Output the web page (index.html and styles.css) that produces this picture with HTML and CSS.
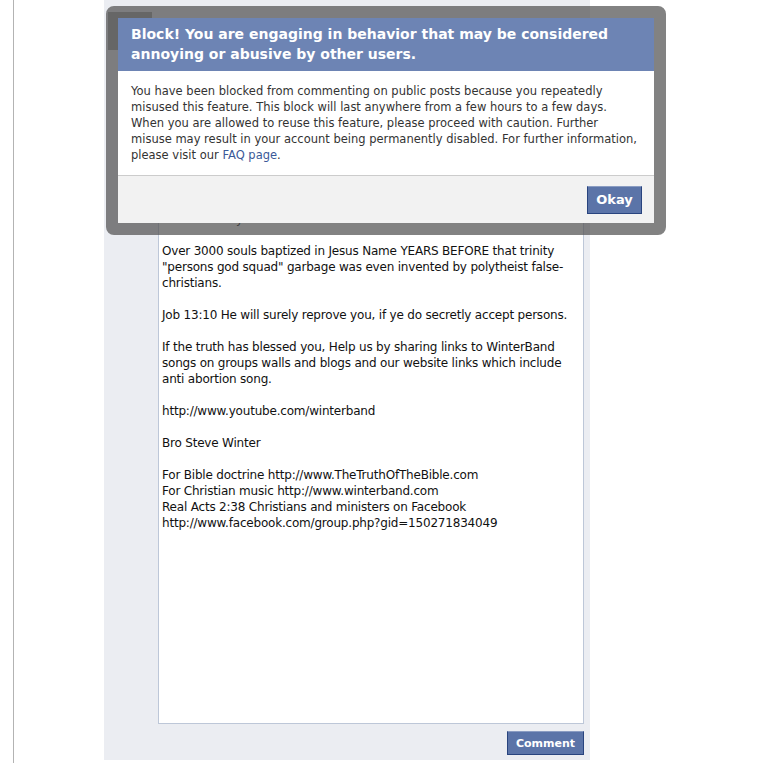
FILE: index.html
```html
<!DOCTYPE html>
<html lang="en">
<head>
    <meta charset="UTF-8">
    <title>Comment blocked</title>
    <link rel="stylesheet" href="styles.css">
</head>
<body>
    <div class="page">
        <div class="panel">
            <div class="top-row">
                <div class="thumb"></div>
            </div>
            <div class="comment-box">
                <p>God blesses you</p>
                <p>Over 3000 souls baptized in Jesus Name YEARS BEFORE that trinity "persons god squad" garbage was even invented by polytheist false-christians.</p>
                <p>Job 13:10 He will surely reprove you, if ye do secretly accept persons.</p>
                <p>If the truth has blessed you, Help us by sharing links to WinterBand songs on groups walls and blogs and our website links which include anti abortion song.</p>
                <p>http://www.youtube.com/winterband</p>
                <p>Bro Steve Winter</p>
                <p>For Bible doctrine http://www.TheTruthOfTheBible.com<br>For Christian music http://www.winterband.com<br>Real Acts 2:38 Christians and ministers on Facebook<br>http://www.facebook.com/group.php?gid=150271834049</p>
            </div>
            <div class="actions">
                <button class="btn">Comment</button>
            </div>
        </div>
    </div>

    <div class="dialog">
        <div class="dialog-inner">
            <h2 class="dialog-title">Block! You are engaging in behavior that may be considered annoying or abusive by other users.</h2>
            <div class="dialog-body">
                You have been blocked from commenting on public posts because you repeatedly misused this feature. This block will last anywhere from a few hours to a few days. When you are allowed to reuse this feature, please proceed with caution. Further misuse may result in your account being permanently disabled. For further information, please visit our <a href="#">FAQ page</a>.
            </div>
            <div class="dialog-footer">
                <button class="btn btn-big">Okay</button>
            </div>
        </div>
    </div>
</body>
</html>
```

FILE: styles.css
```css
body {
    margin: 0;
    background: #fff;
    font-family: "DejaVu Sans", sans-serif;
    font-size: 12px;
    color: #111;
}
.page {
    margin-left: 13px;
    border-left: 1px solid #b3b3b3;
    height: 763px;
    padding-left: 90px;
}
.panel {
    width: 426px;
    height: 760px;
    background: #ebedf2;
    padding: 0 6px 0 54px;
    display: flex;
    flex-direction: column;
}
.top-row {
    display: flex;
    height: 208px;
    margin-left: -50px;
}
.thumb {
    width: 44px;
    height: 38px;
    margin-top: 12px;
    background: #9a9a9a;
}
.comment-box {
    height: 510px;
    background: #fff;
    border: 1px solid #bdc7d8;
    padding: 2px 3px;
    line-height: 16px;
    letter-spacing: -0.2px;
}
.comment-box p {
    margin: 0 0 16px;
}
.actions {
    display: flex;
    justify-content: flex-end;
    margin-top: 7px;
}
.btn {
    font-family: "DejaVu Sans", sans-serif;
    font-size: 11px;
    font-weight: bold;
    color: #fff;
    background: #5b74a8;
    border: 1px solid #29447e;
    border-top-color: #8a9cc2;
    padding: 0 7px;
    height: 24px;
    width: 77px;
}
.btn-big {
    font-size: 13px;
    width: 55px;
    height: 28px;
    padding: 0;
}
.dialog {
    position: absolute;
    left: 106px;
    top: 6px;
    width: 536px;
    border: 12px solid rgba(82, 82, 82, 0.72);
    border-radius: 8px;
}
.dialog-inner {
    background: #fff;
}
.dialog-title {
    margin: 0;
    background: #6d84b4;
    color: #fff;
    font-size: 14px;
    line-height: 20px;
    padding: 6px 12px 7px 13px;
}
.dialog-body {
    padding: 12px 14px 12px 13px;
    font-size: 11.5px;
    line-height: 16px;
    color: #333;
}
.dialog-body a {
    color: #3b5998;
    text-decoration: none;
}
.dialog-footer {
    background: #f2f2f2;
    border-top: 1px solid #ccc;
    height: 47px;
    display: flex;
    align-items: center;
    justify-content: flex-end;
    padding-right: 12px;
}
```
